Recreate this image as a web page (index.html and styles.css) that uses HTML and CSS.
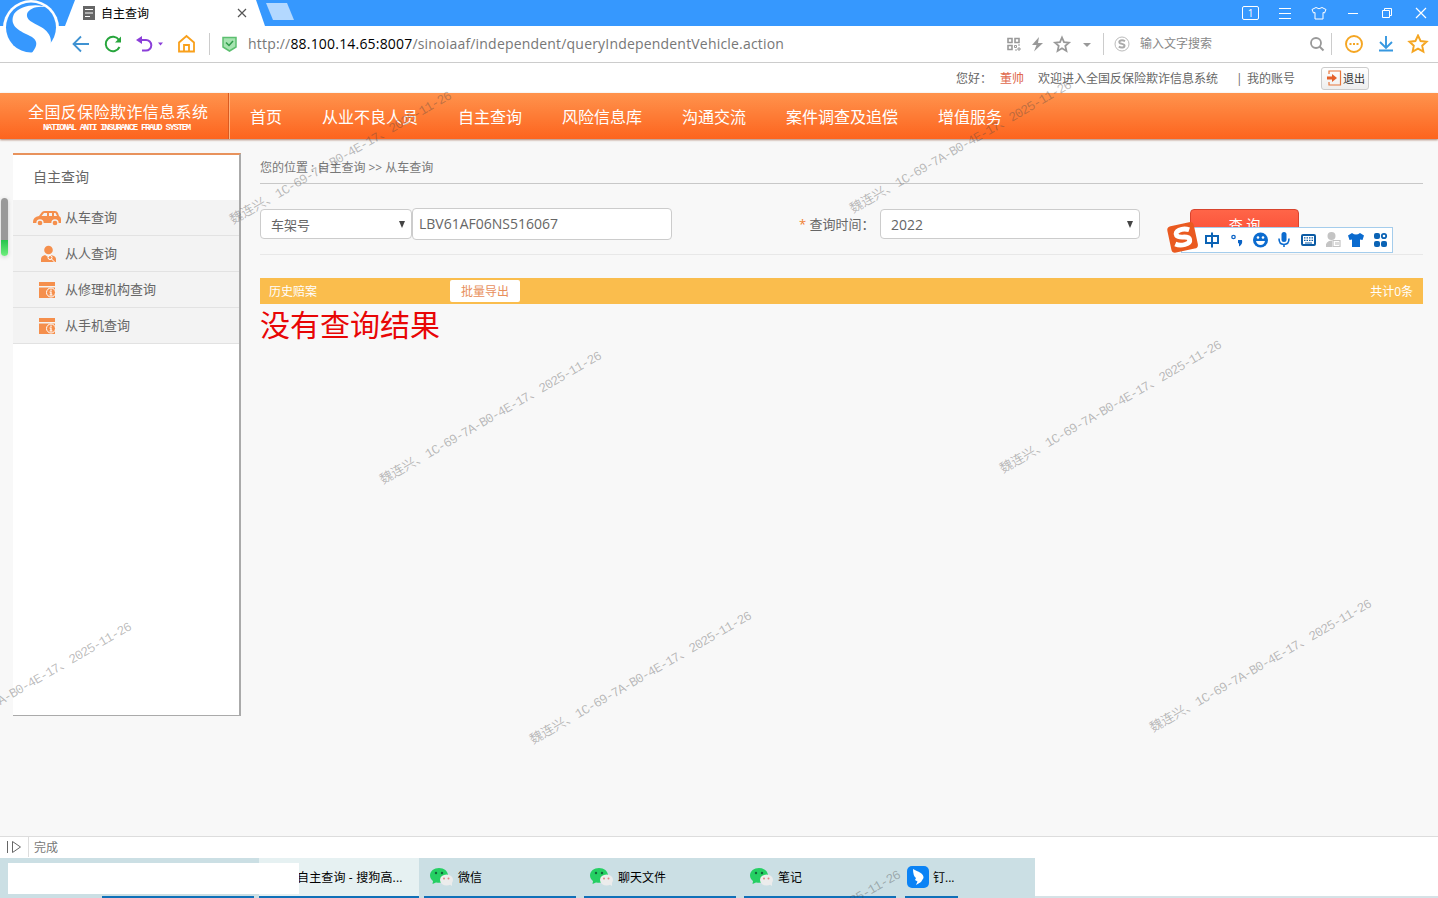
FILE: index.html
```html
<!DOCTYPE html>
<html lang="zh-CN">
<head>
    <meta charset="UTF-8">
    <title>自主查询</title>
    <link rel="stylesheet" href="styles.css">
</head>
<body>

    <!-- Browser tabs -->
    <div class="titlebar">
        <svg class="tab-shape" width="300" height="26" viewBox="0 0 300 26">
            <path d="M65 26 L75 0 H256 L265 26Z" fill="#fff"/>
            <path d="M266 3 H287 L294 20 H273Z" fill="#b3d8ff"/>
        </svg>
        <svg class="logo" width="62" height="60" viewBox="0 0 62 60">
            <circle cx="31" cy="28" r="28" fill="#fff"/>
            <circle cx="31" cy="27.5" r="25" fill="#3698fe"/>
            <path d="M49 8 C38 3 20 5 14 14 C9 25 18 30 26 34 C38 39 39 44 32 53 L45 54 C54 45 53 34 41 27 C32 22 26 20 27 14 C29 8 39 5 49 8Z" fill="#fff"/>
        </svg>
        <svg class="tab-icon" width="12" height="14" viewBox="0 0 12 14">
            <rect width="12" height="14" fill="#666"/>
            <path d="M2 3.5h8M2 7h8M2 10.5h5" stroke="#fff"/>
        </svg>
        <span class="tab-title">自主查询</span>
        <svg class="tab-close" width="10" height="10" viewBox="0 0 10 10"><path d="M1 1l8 8M9 1l-8 8" stroke="#555" stroke-width="1.2"/></svg>
        <div class="window-buttons">
            <span class="tab-count">1</span>
            <svg height="12" viewBox="0 0 14 12"><path d="M1 1.5h12M1 6.5h12M1 11.5h12" stroke="#fff"/></svg>
            <svg height="14" viewBox="0 0 16 14"><path d="M5 1.5Q8 4 11 1.5L15 3.5L13.5 7L12 6.5V13H4V6.5L2.500 7L1 3.500Z" fill="none" stroke="#fff"/></svg>
            <svg height="12" viewBox="0 0 12 12"><path d="M1 6.500h10" stroke="#fff"/></svg>
            <svg height="12" viewBox="0 0 12 12"><path d="M1.500 3.500h7v7h-7zM3.500 3.500v-2h7v7h-2" fill="none" stroke="#fff"/></svg>
            <svg height="12" viewBox="0 0 12 12"><path d="M1 1l10 10M11 1L1 11" stroke="#fff" stroke-width="1.200"/></svg>
        </div>
    </div>

    <!-- Address bar -->
    <div class="toolbar">
        <svg class="nav-icons" width="137" height="36" viewBox="0 0 137 36" fill="none">
            <path d="M17 18H2M9 10.500L1.500 18L9 25.500" stroke="#3f92d2" stroke-width="1.800"/>
            <path d="M47 14A7.200 7.200 0 1 0 47.500 21" stroke="#27a53c" stroke-width="2"/>
            <path d="M43 16.500h6v-6z" fill="#27a53c"/>
            <path d="M68 14h6a5.300 5.300 0 0 1 0 10.600h-4" stroke="#8b3fd9" stroke-width="2"/>
            <path d="M64 14l6-4v8z" fill="#8b3fd9"/>
            <path d="M86 16.500h5l-2.500 3z" fill="#8b3fd9"/>
            <path d="M107 16.500L114.500 10L122 16.500V25.500H107Z M112 25v-6h5v6" stroke="#f9a01b" stroke-width="1.800"/>
        </svg>
        <span class="divider"></span>
        <svg class="shield" width="15" height="16" viewBox="0 0 15 16"><path d="M1 1.500H14V11L7.500 15L1 11Z" fill="#a6e3b0" stroke="#5cbf6f" stroke-width="1.500"/><path d="M4 6.500l3 3l4-4.500" fill="none" stroke="#2f9c49" stroke-width="1.500"/></svg>
        <span class="url">http://<b>88.100.14.65:8007</b>/sinoiaaf/independent/queryIndependentVehicle.action</span>
        <svg class="url-icons" width="90" height="20" viewBox="0 0 90 20" fill="none" stroke="#999">
            <path d="M2 4.500h4v4h-4zM9 4.500h4v4h-4zM2 11.500h4v4h-4z" stroke-width="1.600"/>
            <path d="M8.500 11.500h2v2h-2zM12 14h2v2h-2zM12 11h2M9 16h2" stroke-width="1"/>
            <path d="M33 3L26 11h4.500L28 17.500L37 9h-5z" fill="#999" stroke="none"/>
            <path d="M56 3.500l2 4.600 5 .5-3.700 3.300 1.100 5-4.400-2.600-4.400 2.600 1.100-5L49 8.600l5-.5z" stroke-width="1.800"/>
            <path d="M77 9h8l-4 4z" fill="#999" stroke="none"/>
        </svg>
        <span class="divider"></span>
        <svg class="engine" width="16" height="16" viewBox="0 0 16 16" fill="none"><circle cx="8" cy="8" r="7" stroke="#bbb"/><path d="M11 5.200C8 3.500 4.500 4.500 5.500 6.700C6.500 8.300 10.500 7.500 10.500 9.700C10.500 11.800 7 12 4.800 10.700" stroke="#aaa" stroke-width="2"/></svg>
        <span class="search-text">输入文字搜索</span>
        <svg class="search-icon" width="16" height="16" viewBox="0 0 16 16" fill="none"><circle cx="7" cy="7" r="5" stroke="#999" stroke-width="1.800"/><path d="M10.500 10.500l4 4" stroke="#999" stroke-width="2"/></svg>
        <span class="divider"></span>
        <svg class="tool-icons" width="86" height="20" viewBox="0 0 86 20" fill="none">
            <circle cx="11" cy="10" r="8" stroke="#f5a623" stroke-width="1.900"/>
            <path d="M6.500 10h2M10 10h2M13.500 10h2" stroke="#f5a623" stroke-width="1.800"/>
            <path d="M43 2v12M37 8l6 6 6-6M36 16.500h14" stroke="#3698e0" stroke-width="1.900"/>
            <path d="M75 1.500l2.600 5.500 6 .7-4.400 4 1.200 6-5.400-3-5.400 3 1.200-6-4.400-4 6-.7z" stroke="#f5a623" stroke-width="1.900"/>
        </svg>
    </div>

    <!-- User bar -->
    <div class="userbar">
        <span class="hello">您好：</span>
        <span class="user-name">董帅</span>
        <span class="welcome">欢迎进入全国反保险欺诈信息系统</span>
        <span class="bar">|</span>
        <span class="account">我的账号</span>
        <button class="logout"><svg width="15" height="16" viewBox="0 0 15 16"><path d="M2 4V1h11.500v14H2v-3" fill="none" stroke="#e8773c" stroke-width="1.200"/><path d="M0 6.500h5V4l5 4-5 4V9.500H0z" fill="#e5602a"/></svg>退出</button>
    </div>

    <!-- Main menu -->
    <div class="header">
        <div class="brand">
            <div class="brand-cn">全国反保险欺诈信息系统</div>
            <div class="brand-en">NATIONAL ANTI INSURANCE FRAUD SYSTEM</div>
        </div>
        <div class="menu">
            <span>首页</span>
            <span>从业不良人员</span>
            <span>自主查询</span>
            <span>风险信息库</span>
            <span>沟通交流</span>
            <span>案件调查及追偿</span>
            <span>增值服务</span>
        </div>
    </div>

    <div class="page">
        <div class="sidebar">
            <div class="side-title">自主查询</div>
            <div class="side-item">
                <svg width="28" height="16" viewBox="0 0 28 16"><path d="M0 12Q0 7 6 6L9 2Q10 1 12 1H22Q24 1 25 3L26 6Q28 7 28 9V13H0Z" fill="#f58f4c"/><path d="M8.500 6l2.500-3h3v3zM16 3h3v3h-3zM21 3h1.500l1.500 3h-3z" fill="#f3f3f3"/><circle cx="7" cy="13" r="3" fill="#f58f4c" stroke="#f3f3f3" stroke-width="1.300"/><circle cx="22" cy="13" r="3" fill="#f58f4c" stroke="#f3f3f3" stroke-width="1.300"/></svg>
                从车查询
            </div>
            <div class="side-item">
                <svg width="28" height="18" viewBox="0 0 28 18"><circle cx="15.500" cy="5" r="4.300" fill="#f58f4c"/><path d="M8 17V14Q8 11 12 10L15 12L18 10Q23 11 23 14V17Z" fill="#f58f4c"/><circle cx="17" cy="12.500" r="2" fill="none" stroke="#fff"/><path d="M18.500 14l3 3" stroke="#fff"/></svg>
                从人查询
            </div>
            <div class="side-item">
                <svg width="28" height="16" viewBox="0 0 28 16"><path d="M6 0H22V4H6ZM6 5.500H22V16H6Z" fill="#f58f4c"/><circle cx="18" cy="10.500" r="4.500" fill="#f58f4c" stroke="#fff"/><path d="M18 7.500v1.500M16.500 10h1.500v3M16.500 13h3" fill="none" stroke="#fff" stroke-width="1.200"/></svg>
                从修理机构查询
            </div>
            <div class="side-item">
                <svg width="28" height="16" viewBox="0 0 28 16"><path d="M6 0H22V4H6ZM6 5.500H22V16H6Z" fill="#f58f4c"/><circle cx="18" cy="10.500" r="4.500" fill="#f58f4c" stroke="#fff"/><path d="M18 7.500v1.500M16.500 10h1.500v3M16.500 13h3" fill="none" stroke="#fff" stroke-width="1.200"/></svg>
                从手机查询
            </div>
        </div>

        <div class="content">
            <div class="crumbs">您的位置 : 自主查询 &gt;&gt; 从车查询</div>
            <div class="query">
                <div class="select type">车架号<i></i></div>
                <input class="vin" type="text" value="LBV61AF06NS516067">
                <label class="year-label"><em>*</em> 查询时间：</label>
                <div class="select year">2022<i></i></div>
                <button class="search">查 询</button>
            </div>
            <div class="result-bar">
                <span class="result-title">历史赔案</span>
                <span class="export">批量导出</span>
                <span class="total">共计0条</span>
            </div>
            <div class="no-result">没有查询结果</div>
        </div>
        <div class="meter"></div>
    </div>

    <!-- Browser status bar -->
    <div class="statusbar">
        <span class="play"><svg width="16" height="14" viewBox="0 0 16 14" fill="none" stroke="#666"><path d="M1.500 1v12M6.500 1.500v11l8-5.500z"/></svg></span>
        <span>完成</span>
    </div>

    <!-- Windows taskbar -->
    <div class="taskbar">
        <div class="tasks">
            <div class="task blank"></div>
            <div class="task active">自主查询 - 搜狗高...</div>
            <div class="task">
                <svg width="24" height="20" viewBox="0 0 24 20"><path d="M9 1C4 1 0 4 0 8.500C0 11 1.500 13 3 14L2.500 17L6 15.500Q18 17 18 8.500C18 4 14 1 9 1Z" fill="#25cf63"/><circle cx="6" cy="6" r="1.200" fill="#11663a"/><circle cx="12" cy="6" r="1.200" fill="#11663a"/><ellipse cx="16.500" cy="13" rx="6.500" ry="5.500" fill="#ececec"/><path d="M19 17l3 2v-4z" fill="#ececec"/><circle cx="14" cy="11.500" r="1" fill="#d88"/><circle cx="18.500" cy="11.500" r="1" fill="#d88"/></svg>
                微信
            </div>
            <div class="task">
                <svg width="24" height="20" viewBox="0 0 24 20"><path d="M9 1C4 1 0 4 0 8.500C0 11 1.500 13 3 14L2.500 17L6 15.500Q18 17 18 8.500C18 4 14 1 9 1Z" fill="#25cf63"/><circle cx="6" cy="6" r="1.200" fill="#11663a"/><circle cx="12" cy="6" r="1.200" fill="#11663a"/><ellipse cx="16.500" cy="13" rx="6.500" ry="5.500" fill="#ececec"/><path d="M19 17l3 2v-4z" fill="#ececec"/><circle cx="14" cy="11.500" r="1" fill="#d88"/><circle cx="18.500" cy="11.500" r="1" fill="#d88"/></svg>
                聊天文件
            </div>
            <div class="task">
                <svg width="24" height="20" viewBox="0 0 24 20"><path d="M9 1C4 1 0 4 0 8.500C0 11 1.500 13 3 14L2.500 17L6 15.500Q18 17 18 8.500C18 4 14 1 9 1Z" fill="#25cf63"/><circle cx="6" cy="6" r="1.200" fill="#11663a"/><circle cx="12" cy="6" r="1.200" fill="#11663a"/><ellipse cx="16.500" cy="13" rx="6.500" ry="5.500" fill="#ececec"/><path d="M19 17l3 2v-4z" fill="#ececec"/><circle cx="14" cy="11.500" r="1" fill="#d88"/><circle cx="18.500" cy="11.500" r="1" fill="#d88"/></svg>
                笔记
            </div>
            <div class="task ding">
                <svg width="22" height="24" viewBox="0 0 22 24"><rect y="1" width="22" height="22" rx="5" fill="#0b83f5"/><path d="M6 4C11 7 17 8 16.500 13L14 17L9 20L10.500 16.500L8 15L9 13Q6 11 6 4Z" fill="#fff"/></svg>
                钉...
            </div>
        </div>
        <div class="mask"></div>
    </div>

    <!-- Input method bar -->
    <div class="ime">
        <svg width="226" height="34" viewBox="0 0 226 34" fill="none">
            <rect x="14.500" y="5.500" width="211" height="25" fill="#fff" stroke="#a5cdec"/>
            <g transform="rotate(-12 15 15)"><rect x="2" y="2" width="27" height="27" rx="4" fill="#ea5a20"/><path d="M23.500 9.500C17 5.500 8 8 10 12.500C12 16.500 22 14 22 19C22 24 12 24 7 20.500" stroke="#fff" stroke-width="4.800"/></g>
            <g stroke="#0b63b5" stroke-width="2"><path d="M39 14h12v7H39zM45 10.500v15"/></g>
            <circle cx="66.500" cy="15" r="1.700" stroke="#0b63c5" stroke-width="1.300"/>
            <path d="M71 18h4q1 4-3 6.500v-3l-1-.5z" fill="#0b63c5"/>
            <circle cx="93.500" cy="18" r="7.500" fill="#0b6bcf"/>
            <circle cx="91" cy="15.500" r="1.300" fill="#fff"/><circle cx="96" cy="15.500" r="1.300" fill="#fff"/><path d="M89 19h9q-1 4-4.500 4T89 19z" fill="#fff"/>
            <rect x="114.500" y="10" width="5" height="10" rx="2.500" fill="#0b6bcf"/><path d="M112 16.500q0 6 5 6t5-6M117 22v3" stroke="#0b6bcf" stroke-width="1.600"/>
            <rect x="135" y="13" width="13" height="10" rx="1" stroke="#0b5ba5" stroke-width="2"/><path d="M137 15.800h9M137 18.300h9" stroke="#0b5ba5" stroke-width="1.300" stroke-dasharray="1.500 1"/><path d="M138 21h7" stroke="#0b5ba5"/>
            <circle cx="164.500" cy="14" r="4" fill="#c4c4c4"/><path d="M159 25q-1-6 6-6.500V25z" fill="#c4c4c4"/><path d="M166 18.500h7v6h-7zM169 20v3M171 20v3" stroke="#c4c4c4" stroke-width="1.200"/>
            <path d="M185 11q4 3 8 0l4 2.500-1.500 4.500-2.500-.5V25h-8v-7.500l-2.500.5-1.500-4.500z" fill="#0b6bcf"/>
            <g fill="#0b63b5"><rect x="207" y="11" width="6" height="6" rx="2"/><rect x="207" y="19" width="6" height="6" rx="2"/><rect x="214" y="19" width="6" height="6" rx="2"/></g><circle cx="217" cy="14" r="2.200" stroke="#0b63b5" stroke-width="1.800"/>
        </svg>
    </div>

    <!-- Watermark -->
    <div class="watermarks">
        <div class="wm wm1">魏连兴、<span>1C-69-7A-B0-4E-17</span>、<span>2025-11-26</span></div>
        <div class="wm wm2">魏连兴、<span>1C-69-7A-B0-4E-17</span>、<span>2025-11-26</span></div>
        <div class="wm wm3">魏连兴、<span>1C-69-7A-B0-4E-17</span>、<span>2025-11-26</span></div>
        <div class="wm wm4">魏连兴、<span>1C-69-7A-B0-4E-17</span>、<span>2025-11-26</span></div>
        <div class="wm wm5">魏连兴、<span>1C-69-7A-B0-4E-17</span>、<span>2025-11-26</span></div>
        <div class="wm wm6">魏连兴、<span>1C-69-7A-B0-4E-17</span>、<span>2025-11-26</span></div>
        <div class="wm wm7">魏连兴、<span>1C-69-7A-B0-4E-17</span>、<span>2025-11-26</span></div>
        <div class="wm wm8">魏连兴、<span>1C-69-7A-B0-4E-17</span>、<span>2025-11-26</span></div>
    </div>
</body>
</html>
```
FILE: styles.css
```css
* {
    box-sizing: border-box;
}
body {
    margin: 0;
    height: 898px;
    display: flex;
    flex-direction: column;
    position: relative;
    overflow: hidden;
    background-color: #fff;
    font-family: "Open Sans", "Noto Sans CJK SC", sans-serif;
    font-size: 12px;
    color: #666;
    white-space: nowrap;
}
svg {
    display: block;
    flex-shrink: 0;
}
button, input {
    font-family: inherit;
}

/* browser */
.titlebar {
    height: 26px;
    flex-shrink: 0;
    display: flex;
    align-items: center;
    background-color: #3698fe;
    padding-left: 83px;
    position: relative;
}
.tab-shape {
    position: absolute;
    left: 0;
    top: 0;
}
.logo {
    position: absolute;
    left: 0;
    top: 0;
    z-index: 2;
}
.tab-icon, .tab-title, .tab-close {
    position: relative;
}
.tab-title {
    margin-left: 6px;
    width: 136px;
    color: #000;
}
.window-buttons {
    margin-left: auto;
    display: flex;
    align-items: center;
}
.window-buttons svg {
    width: 34px;
}
.tab-count {
    width: 17px;
    height: 14px;
    border: 1px solid #fff;
    border-radius: 2px;
    color: #fff;
    font-size: 10px;
    line-height: 12px;
    text-align: center;
    margin-right: 9px;
}
.toolbar {
    height: 37px;
    flex-shrink: 0;
    display: flex;
    align-items: center;
    border-bottom: 1px solid #ccc;
    padding-left: 72px;
    background-color: #fff;
}
.divider {
    width: 1px;
    height: 22px;
    background-color: #ccc;
}
.shield {
    margin-left: 12px;
}
.url {
    margin: -2px 0 0 11px;
    width: 758px;
    font-size: 14px;
    letter-spacing: 0.19px;
    color: #777;
}
.url b {
    font-weight: 400;
    color: #000;
}
.url-icons {
    margin-right: 7px;
}
.engine {
    margin-left: 10px;
}
.search-text {
    margin: -2px 0 0 10px;
    width: 169px;
    color: #888;
}
.search-icon {
    margin-right: 6px;
}
.tool-icons {
    margin-left: 11px;
}

/* user bar */
.userbar {
    height: 30px;
    flex-shrink: 0;
    display: flex;
    align-items: center;
    padding-left: 956px;
}
.hello {
    width: 44px;
}
.user-name {
    width: 38px;
    color: #e0684c;
}
.welcome {
    width: 198px;
}
.bar {
    width: 11px;
}
.account {
    width: 74px;
}
.logout {
    width: 48px;
    height: 23px;
    padding: 0 4px 0 5px;
    display: flex;
    align-items: center;
    gap: 1px;
    border: 1px solid #ccc;
    border-radius: 3px;
    background: linear-gradient(#fff, #eee);
    font-size: 11px;
    color: #333;
}

/* orange menu */
.header {
    height: 46px;
    flex-shrink: 0;
    display: flex;
    background: linear-gradient(#ff934d, #fd641e);
    box-shadow: 0 1px 2px rgba(120, 50, 20, 0.6);
    position: relative;
    color: #fff;
}
.brand {
    width: 230px;
    padding: 8px 0 0 28px;
    border-right: 1px solid #ffb07c;
    box-shadow: inset -1px 0 #d95a20;
}
.brand-cn {
    font-family: "Noto Sans CJK SC", sans-serif;
    font-size: 16px;
    line-height: 21px;
    letter-spacing: 0.4px;
}
.brand-en {
    font-family: "Liberation Mono", monospace;
    font-size: 9px;
    font-weight: bold;
    line-height: 13px;
    padding-left: 15px;
    letter-spacing: -1.32px;
}
.menu {
    display: flex;
    align-items: center;
    gap: 40px;
    padding: 0 0 0 20px;
    font-size: 16px;
    line-height: 46px;
    height: 48px;
}

/* page */
.page {
    flex: 1;
    display: flex;
    align-items: flex-start;
    padding: 14px 15px 0 13px;
    background-color: #f8f8f8;
    position: relative;
    z-index: -1;
}
.sidebar {
    width: 228px;
    height: 563px;
    background-color: #fff;
    border-top: 2px solid #e8925c;
    border-right: 2px solid #aaa;
    border-bottom: 1px solid #aaa;
}
.side-title {
    height: 45px;
    line-height: 43px;
    padding-left: 20px;
    font-size: 14px;
}
.side-item {
    height: 36px;
    display: flex;
    align-items: center;
    gap: 4px;
    padding: 0 0 2px 20px;
    background-color: #f3f3f3;
    border-bottom: 1px solid #e2e2e2;
    font-size: 13px;
}
.side-item svg {
    margin-top: 3px;
}
.meter {
    position: absolute;
    left: 1px;
    top: 59px;
    width: 7px;
    height: 58px;
    border-radius: 4px;
    background: linear-gradient(#999 0 42px, #25c34c 42px, #6fee7d);
    box-shadow: 0 1px 4px #ccc;
}
.content {
    margin-left: 19px;
    width: 1163px;
}
.crumbs {
    height: 31px;
    line-height: 29px;
    border-bottom: 1px solid #c8c8c8;
    color: #777;
}
.query {
    height: 71px;
    display: flex;
    align-items: center;
    padding-top: 10px;
    border-bottom: 1px solid #e8e8e8;
}
.select {
    height: 30px;
    display: flex;
    align-items: center;
    justify-content: space-between;
    padding: 0 6px 0 10px;
    border: 1px solid #ccc;
    border-radius: 4px;
    background-color: #fff;
    font-size: 14px;
}
.select i {
    border: 3.5px solid transparent;
    border-top: 7px solid #444;
    border-bottom: none;
}
.type {
    width: 152px;
    font-size: 13px;
}
.vin {
    width: 260px;
    height: 32px;
    padding: 0 6px 2px;
    border: 1px solid #ccc;
    border-radius: 4px;
    font-size: 14px;
    color: #666;
}
.year-label {
    width: 208px;
    margin-top: -2px;
    padding-left: 127px;
    font-size: 13px;
}
.year-label em {
    font-style: normal;
    color: #f08030;
}
.year {
    width: 260px;
}
.search {
    width: 109px;
    height: 31px;
    margin-left: 50px;
    border: 1px solid #d8442e;
    border-radius: 4px;
    background: linear-gradient(#ff6548, #fa4c35);
    color: #fff;
    font-size: 14px;
}
.result-bar {
    height: 26px;
    margin-top: 23px;
    display: flex;
    align-items: center;
    padding: 0 10px 0 9px;
    background-color: #fabd4d;
    color: #fff;
}
.result-title {
    width: 181px;
}
.export {
    width: 70px;
    height: 22px;
    line-height: 23px;
    border-radius: 2px;
    background-color: #fff;
    color: #e88f5c;
    text-align: center;
}
.total {
    margin-left: auto;
}
.no-result {
    font-size: 30px;
    line-height: 42px;
    color: #e80606;
}

/* status and task bars */
.statusbar {
    height: 22px;
    flex-shrink: 0;
    display: flex;
    align-items: center;
    gap: 5px;
    padding-bottom: 1px;
    border-top: 1px solid #ddd;
    background-color: #fff;
    color: #777;
}
.play {
    width: 29px;
    height: 20px;
    padding: 3px 0 0 6px;
    border-right: 1px solid #ddd;
}
.taskbar {
    height: 40px;
    flex-shrink: 0;
    position: relative;
    background: linear-gradient(#fff 38px, #d5e2e6 38px);
}
.tasks {
    width: 1035px;
    height: 40px;
    display: flex;
    gap: 8px;
    padding-left: 102px;
    background-color: #cbdfe4;
}
.task {
    width: 152px;
    display: flex;
    align-items: center;
    gap: 4px;
    padding-left: 6px;
    border-bottom: 2px solid #1070b8;
    color: #000;
}
.blank {
    margin-right: -3px;
}
.active {
    width: 160px;
    padding-left: 38px;
    margin-right: -3px;
    background-color: #e6f1f2;
    letter-spacing: 0.15px;
}
.ding {
    width: 53px;
    margin-left: 1px;
    padding-left: 2px;
}
.mask {
    position: absolute;
    left: 8px;
    top: 5px;
    width: 291px;
    height: 31px;
    background-color: #fff;
}

/* floating layers */
.ime {
    position: absolute;
    left: 1167px;
    top: 222px;
}
.watermarks {
    position: absolute;
    left: 0;
    top: 0;
    width: 1438px;
    height: 898px;
    overflow: hidden;
    pointer-events: none;
}
.wm {
    position: absolute;
    width: 260px;
    height: 20px;
    line-height: 20px;
    margin: -10px 0 0 -130px;
    text-align: center;
    transform: rotate(-30deg);
    font-family: "Noto Sans CJK SC", sans-serif;
    font-size: 13px;
    color: rgba(70, 70, 70, 0.36);
}
.wm span {
    font-family: "Liberation Mono", monospace;
    font-size: 13px;
    letter-spacing: -0.85px;
}
.wm1 { left: 340px; top: 157px; }
.wm2 { left: 960px; top: 146px; }
.wm3 { left: 490px; top: 417px; }
.wm4 { left: 1110px; top: 406px; }
.wm5 { left: 640px; top: 677px; }
.wm6 { left: 1260px; top: 665px; }
.wm7 { left: 20px; top: 688px; }
.wm8 { left: 789px; top: 936px; }
```
